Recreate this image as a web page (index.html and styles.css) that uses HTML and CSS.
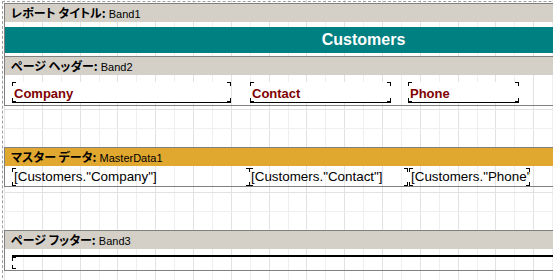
FILE: index.html
```html
<!DOCTYPE html>
<html lang="ja">
<head>
    <meta charset="UTF-8">
    <meta name="viewport" content="width=device-width, initial-scale=1.0">
    <title>Customers - Report Designer</title>
    <link rel="stylesheet" href="styles.css">
</head>
<body>
    <div class="sheet">
        <section class="band">
            <div class="band-head"><b>レポート タイトル:</b> Band1</div>
            <div class="band-body title-body">
                <div class="title-box">Customers</div>
            </div>
        </section>

        <section class="band">
            <div class="band-head"><b>ページ ヘッダー:</b> Band2</div>
            <div class="band-body header-body">
                <div class="cell caption company">Company</div>
                <div class="cell caption contact">Contact</div>
                <div class="cell caption phone">Phone</div>
            </div>
        </section>

        <div class="gap gap-one"></div>

        <section class="band">
            <div class="band-head data-head"><b>マスター データ:</b> MasterData1</div>
            <div class="band-body data-body">
                <div class="cell field company">[Customers."Company"]</div>
                <div class="cell field contact">[Customers."Contact"]</div>
                <div class="cell field phone">[Customers."Phone"]</div>
            </div>
        </section>

        <div class="gap gap-two"></div>

        <section class="band">
            <div class="band-head"><b>ページ フッター:</b> Band3</div>
            <div class="band-body footer-body">
                <div class="cell footer-line"></div>
            </div>
        </section>
    </div>
</body>
</html>
```

FILE: styles.css
```css
html, body {
    margin: 0;
    height: 100%;
    overflow: hidden;
}

body {
    background-color: #fff;
    /* 0.5cm design grid, darker line every 1cm */
    background-image: repeating-linear-gradient(90deg,
        #e2e2e2 0, #e2e2e2 1px, transparent 1px, transparent 18.9px,
        #efefef 18.9px, #efefef 19.9px, transparent 19.9px, transparent 37.8px);
    background-position: 4px 0;
    font-family: "Liberation Sans", Arial, sans-serif;
}

.sheet {
    width: 718px;
    margin: 1px 0 0 2px;
    padding: 1px 0 0 1px;
    border-top: 1px dashed #a0a0a0;
    border-left: 1px dashed #a0a0a0;
    min-height: 300px;
}

.band + .band {
    margin-top: -1px;
}

.band-head {
    height: 18px;
    border-top: 1px solid #808080;
    border-left: 1px solid #808080;
    background-color: #d4d0c8;
    padding-left: 6px;
    font-size: 11px;
    line-height: 18px;
    color: #000;
    white-space: nowrap;
}

.band-head b {
    font-family: "Noto Sans CJK JP", sans-serif;
    font-feature-settings: "palt";
    font-size: 12px;
    font-weight: 700;
}

.data-head {
    background-color: #e1a830;
}

.band-body {
    display: flex;
    align-items: flex-start;
    border-left: 1px solid #808080;
    border-bottom: 1px solid #808080;
    padding-left: 7px;
}

/* title band */
.title-body {
    height: 34px;
    padding-left: 0;
}

.title-box {
    flex: 1;
    height: 26px;
    margin-top: 5px;
    background-color: #008080;
    color: #fff;
    font-size: 16px;
    font-weight: bold;
    line-height: 26px;
    text-align: center;
}

/* text objects with corner marks */
.cell {
    box-sizing: border-box;
    white-space: nowrap;
    overflow: hidden;
    background:
        linear-gradient(#000, #000) left top / 4px 1px no-repeat,
        linear-gradient(#000, #000) left top / 1px 4px no-repeat,
        linear-gradient(#000, #000) right top / 4px 1px no-repeat,
        linear-gradient(#000, #000) right top / 1px 4px no-repeat,
        linear-gradient(#000, #000) left bottom / 4px 1px no-repeat,
        linear-gradient(#000, #000) left bottom / 1px 4px no-repeat,
        linear-gradient(#000, #000) right bottom / 4px 1px no-repeat,
        linear-gradient(#000, #000) right bottom / 1px 4px no-repeat;
}

.header-body {
    height: 30px;
}

.caption {
    height: 21px;
    margin-top: 7px;
    padding: 4px 0 0 2px;
    border-bottom: 1px solid #000;
    background-color: #fff;
    color: #800000;
    font-size: 13px;
    font-weight: bold;
    line-height: 15px;
}

.header-body .company { width: 219px; }
.header-body .contact { width: 141px; margin-left: 19px; }
.header-body .phone { width: 111px; margin-left: 17px; }

/* empty space between bands shows the full grid */
.gap {
    background-image: repeating-linear-gradient(0deg,
        transparent 0, transparent 18.4px, #efefef 18.4px, #efefef 19.4px,
        transparent 19.4px, transparent 36.8px, #e2e2e2 36.8px, #e2e2e2 37.8px);
    background-position: 0 100%;
}

.gap-one { height: 41px; }
.gap-two { height: 43px; }

.data-body {
    height: 20px;
}

.field {
    height: 18px;
    margin-top: 2px;
    padding-left: 2px;
    font-size: 13.4px;
    line-height: 18px;
    color: #000;
}

.data-body .company { width: 238px; }
.data-body .contact { width: 159px; margin-left: -1px; }
.data-body .phone { width: 121px; margin-left: 1px; }

.footer-body {
    height: 21px;
}

.footer-line {
    flex: 1;
    height: 14px;
    margin-top: 6px;
    border-top: 2px solid #000;
}
```
